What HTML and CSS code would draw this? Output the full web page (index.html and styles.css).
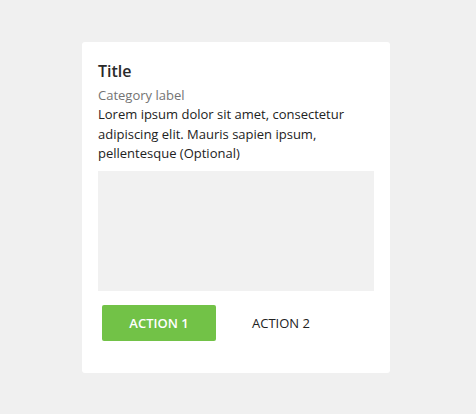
FILE: index.html
```html
<!DOCTYPE html>
<html lang="en">
<head>
  <meta charset="UTF-8" />
  <title>Card</title>
  <link rel="stylesheet" href="styles.css">
</head>
<body>
  <div class="card">
    <h2 class="card-title">Title</h2>
    <div class="card-category">Category label</div>
    <p class="card-text">Lorem ipsum dolor sit amet, consectetur adipiscing elit. Mauris sapien ipsum, pellentesque (Optional)</p>
    <div class="card-media"></div>
    <div class="card-actions">
      <button class="btn btn-primary">ACTION 1</button>
      <button class="btn">ACTION 2</button>
    </div>
  </div>
</body>
</html>
```

FILE: styles.css
```css
body {
  margin: 0;
  background: #f0f0f0;
  font-family: "Open Sans", Arial, sans-serif;
  color: #222;
  padding: 42px 0 0 82px;
}

.card {
  width: 276px;
  background: #fff;
  border-radius: 3px;
  padding: 16px 16px 32px;
}

.card-title {
  margin: 0;
  font-size: 16px;
  font-weight: 600;
  line-height: 26px;
  color: #2a2a2a;
}

.card-category {
  margin-top: 2px;
  font-size: 13px;
  line-height: 18px;
  color: #737373;
}

.card-text {
  margin: 1px 0 0;
  font-size: 13px;
  line-height: 19.5px;
  color: #222;
}

.card-media {
  margin-top: 7px;
  height: 120px;
  background: #f1f1f1;
}

.card-actions {
  display: flex;
  gap: 8px;
  margin-top: 14px;
  padding-left: 4px;
}

.btn {
  width: 114px;
  height: 36px;
  border: none;
  border-radius: 2px;
  background: transparent;
  font-family: inherit;
  font-size: 13px;
  font-weight: 500;
  color: #222;
  cursor: pointer;
}

.btn-primary {
  background: #72c247;
  color: #fff;
  font-weight: 600;
}
```
